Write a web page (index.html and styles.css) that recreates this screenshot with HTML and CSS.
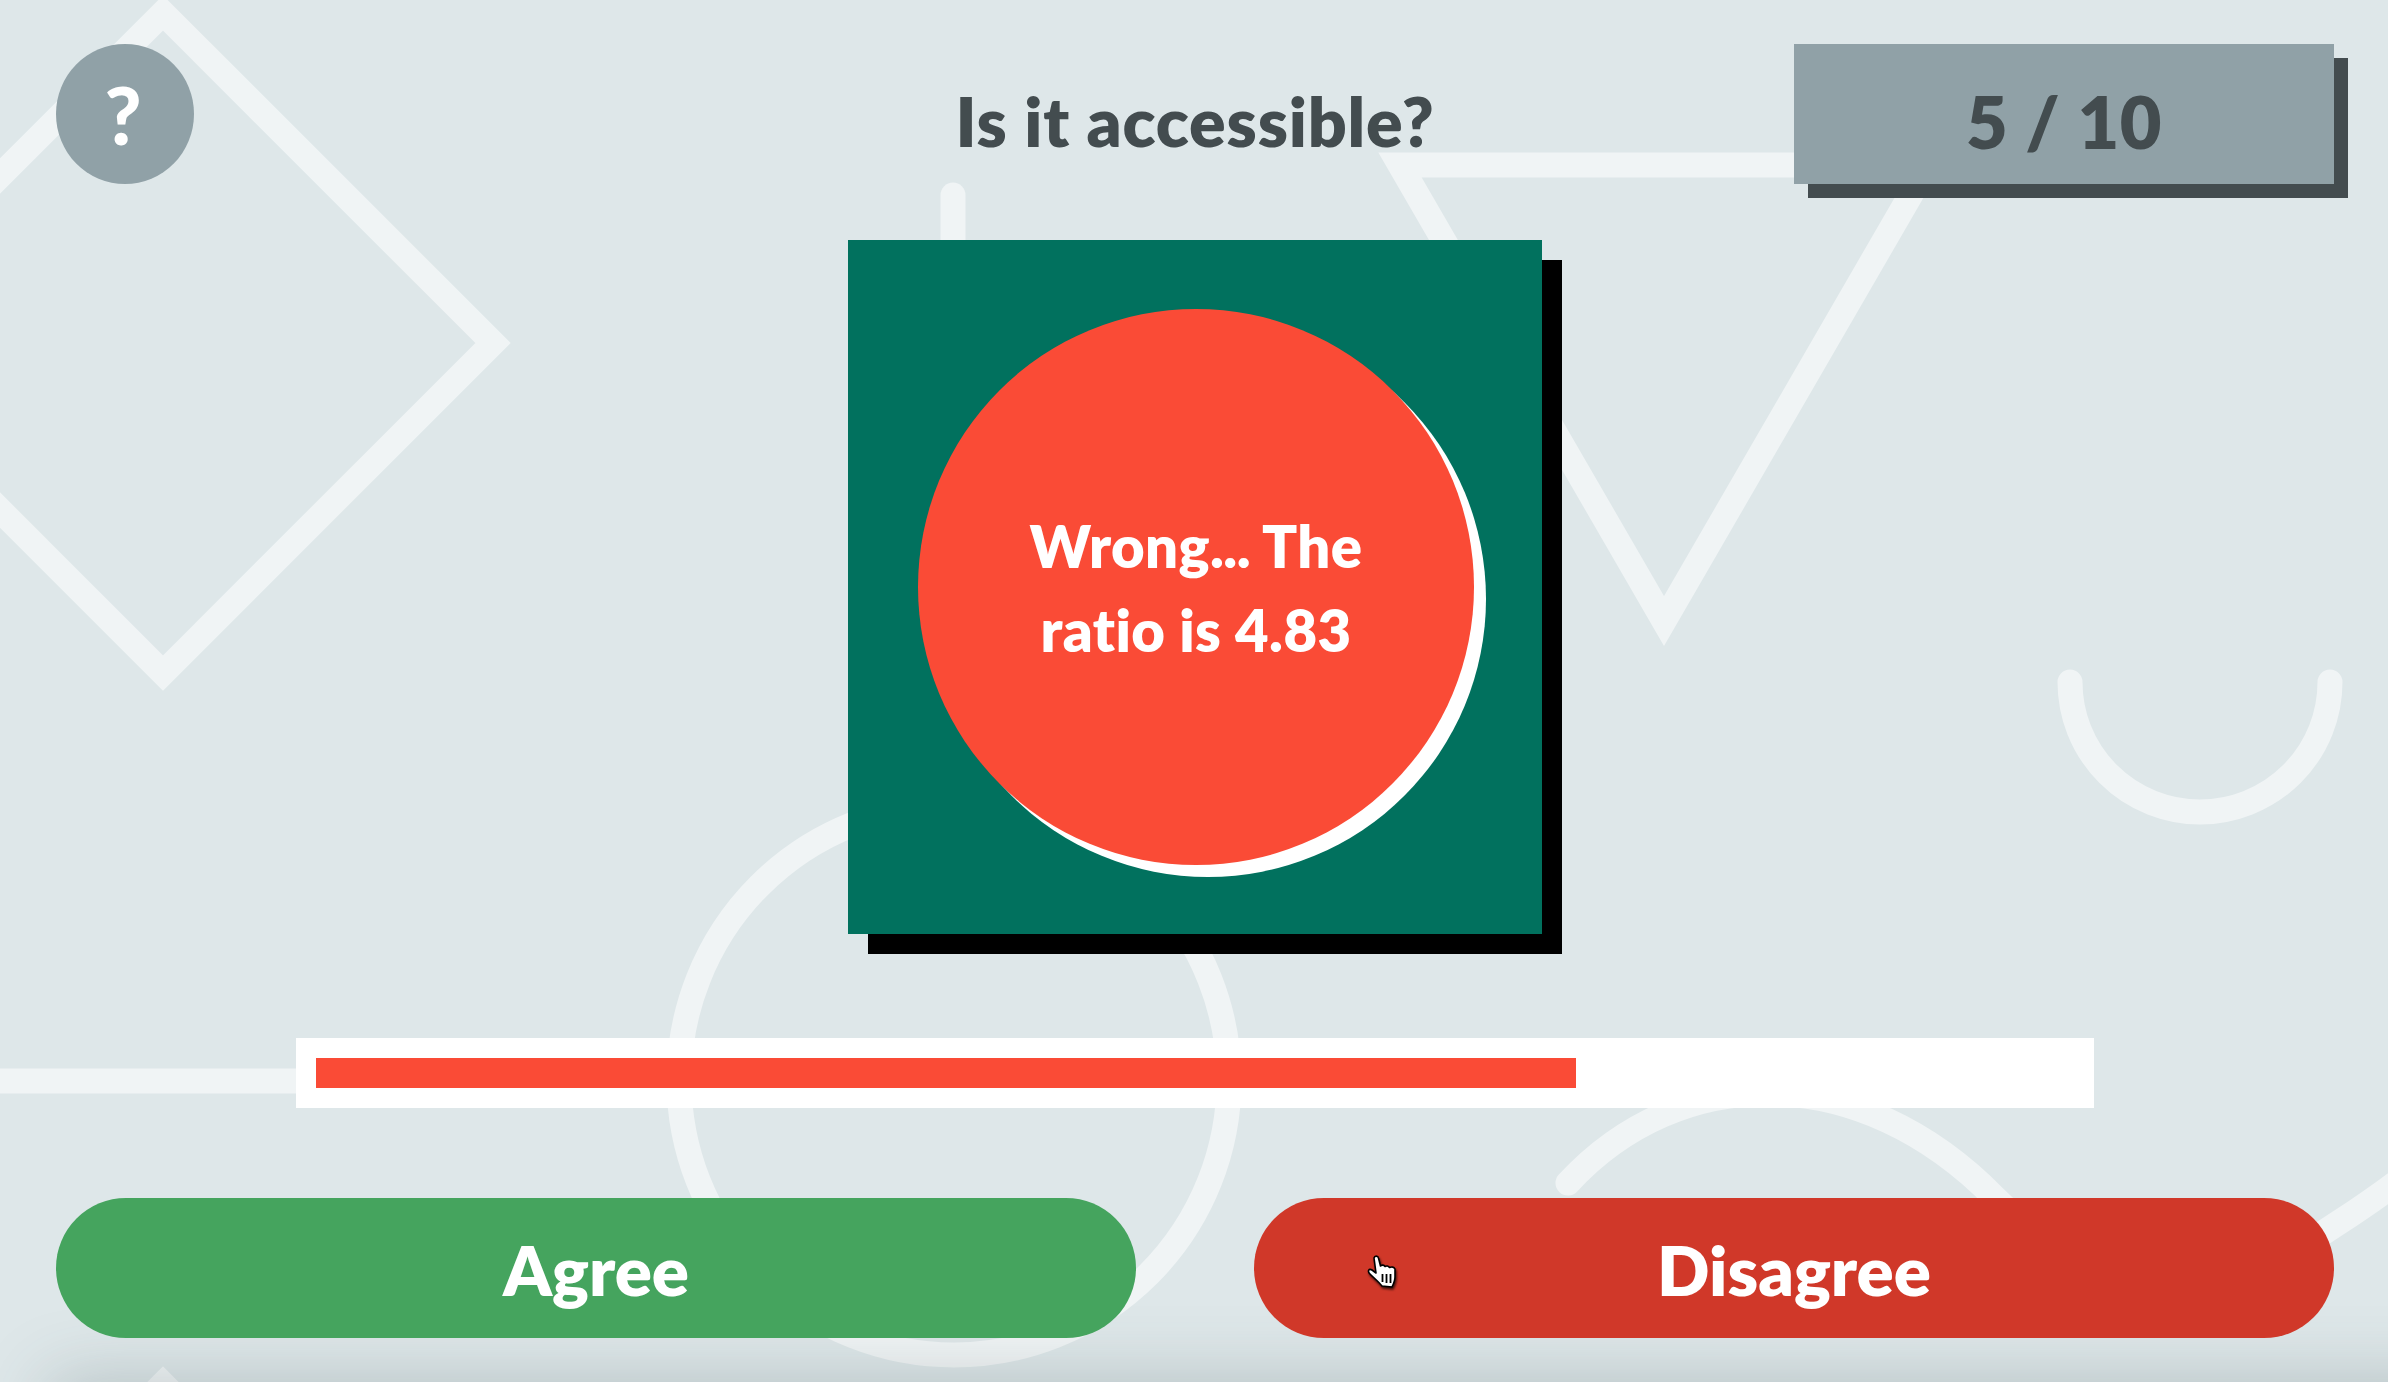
FILE: index.html
```html
<!DOCTYPE html>
<html>
  <head>
    <meta name="viewport" content="width=device-width, initial-scale=1.0">
    <title>Is it accessible?</title>
    <link rel="stylesheet" href="styles.css">
  </head>
  <body>
    <div class="game">
      <!--Background shapes-->
      <svg class="shapes" width="2388" height="1382" viewBox="0 0 2388 1382">
        <polygon points="163,13 493,343 163,673 -167,343"/>
        <polygon points="163,1384 493,1714 -167,1714"/>
        <polygon points="1400,165 1928,165 1664,621"/>
        <circle cx="954" cy="1080" r="275"/>
        <path d="M953 195 V400"/>
        <path d="M-20 1081 H320"/>
        <path d="M2070 682 A130 130 0 0 0 2330 682"/>
        <path d="M1568 1183 C1680 1062 1860 1060 1995 1198 C2090 1295 2220 1300 2320 1235 C2350 1215 2375 1200 2410 1172"/>
      </svg>
      <div class="bottom-shade"></div>

      <div class="content">
        <header class="top">
          <div class="top-left">
            <button class="help" type="button">?</button>
          </div>
          <h1 class="question">Is it accessible?</h1>
          <div class="score">5 / 10</div>
        </header>

        <!--Colour sample-->
        <div class="sample">
          <div class="result">
            <span>Wrong<span class="dots">...</span> The<br>ratio is 4.83</span>
          </div>
        </div>

        <div class="timer">
          <div class="timer-fill" style="width: 71.7%"></div>
        </div>

        <div class="answers">
          <button class="answer agree" type="button">Agree</button>
          <button class="answer disagree" type="button">Disagree</button>
        </div>
      </div>

      <!--Mouse pointer-->
      <svg class="pointer" width="32" height="35" viewBox="0 0 32 35">
        <path class="pointer-hand" d="M7 3 C7.5 0.5 11 0.5 11.5 3 L13.5 11 C15 9.5 17 10 18 11.5 C19.5 10.5 21.5 11 22.5 12.5 C24.5 11.5 27 12 28 14 L28 22 C28 26 26 30 25 32 L15 31 C12 27 8 24 3 19 C0 16 2 13 5 15 L9 18 Z"/>
        <path class="pointer-lines" d="M15.5 19 V27 M19.5 19 V28 M23.5 19 V28"/>
      </svg>
    </div>
  </body>
</html>
```

FILE: styles.css
```css
* {
  box-sizing: border-box;
}

body {
  margin: 0;
  font-family: "Lato", "Open Sans", sans-serif;
  font-variant-ligatures: none;
}

.game {
  position: relative;
  width: 2388px;
  height: 1382px;
  overflow: hidden;
  background-color: #dee7e9;
}

.shapes {
  position: absolute;
  top: 0;
  left: 0;
}

.shapes polygon,
.shapes circle,
.shapes path {
  fill: none;
  stroke: #f0f4f5;
  stroke-width: 25;
  stroke-linecap: round;
  stroke-miterlimit: 10;
}

.bottom-shade {
  position: absolute;
  left: 70px;
  right: -100px;
  top: 1400px;
  height: 60px;
  box-shadow: 0 0 70px 20px rgba(60, 80, 85, 0.26);
}

.content {
  position: relative;
  padding: 44px 54px 0 56px;
}

.top {
  display: grid;
  grid-template-columns: 540px 1fr 540px;
  height: 140px;
}

.help {
  display: block;
  width: 138px;
  height: 140px;
  padding: 0 4px 0 0;
  border: none;
  border-radius: 50%;
  background-color: #90a1a7;
  color: white;
  font-family: inherit;
  font-size: 80px;
  font-weight: 900;
}

.question {
  margin: 0;
  padding-top: 7px;
  color: #434c4f;
  font-size: 68px;
  font-weight: 800;
  letter-spacing: 0.8px;
  line-height: 140px;
  text-align: center;
  white-space: nowrap;
}

.score {
  height: 140px;
  padding-top: 7px;
  background-color: #90a1a7;
  box-shadow: 14px 14px 0 #434c4f;
  color: #434c4f;
  font-size: 72px;
  font-weight: 800;
  letter-spacing: 0.5px;
  line-height: 140px;
  text-align: center;
}

.sample {
  display: flex;
  align-items: center;
  justify-content: center;
  width: 694px;
  height: 694px;
  margin: 56px auto 0;
  padding-left: 2px;
  background-color: #01715e;
  box-shadow: 20px 20px 0 #000;
}

.result {
  display: flex;
  align-items: center;
  justify-content: center;
  width: 556px;
  height: 556px;
  padding-top: 2px;
  border-radius: 50%;
  background-color: #fa4b36;
  box-shadow: 12px 12px 0 #fff;
  color: white;
  font-size: 58px;
  font-weight: 800;
  letter-spacing: 0.4px;
  line-height: 84px;
  text-align: center;
}

.dots {
  letter-spacing: -0.5px;
}

.timer {
  width: 1798px;
  margin: 104px auto 0;
  padding: 20px;
  background-color: white;
}

.timer-fill {
  height: 30px;
  background-color: #fa4b36;
}

.answers {
  display: flex;
  justify-content: space-between;
  margin-top: 90px;
}

.answer {
  width: 1080px;
  height: 140px;
  padding-top: 4px;
  border: none;
  border-radius: 70px;
  color: white;
  font-family: inherit;
  font-size: 69px;
  font-weight: 800;
}

.agree {
  background-color: #45a45e;
}

.disagree {
  background-color: #d03829;
}

.pointer {
  position: absolute;
  left: 1367px;
  top: 1255px;
  filter: drop-shadow(1px 2px 1px rgba(0, 0, 0, 0.7));
}

.pointer-hand {
  fill: white;
  stroke: black;
  stroke-width: 1.6;
  stroke-linejoin: round;
}

.pointer-lines {
  fill: none;
  stroke: black;
  stroke-width: 1.8;
}
```
